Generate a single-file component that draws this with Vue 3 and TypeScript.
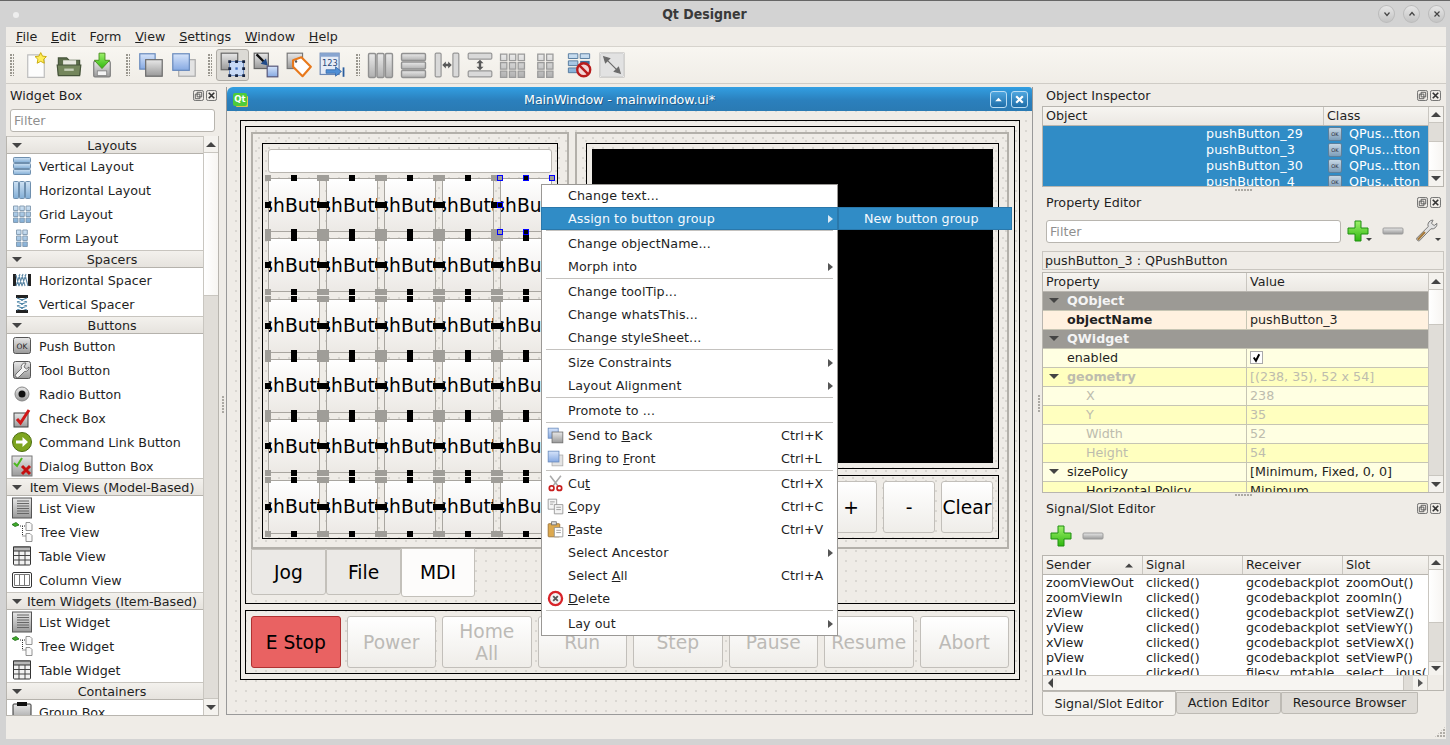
<script setup lang="ts">
type Tool = { icon: string, gray?: boolean, big?: boolean, active?: boolean }

const menus = [['F', 'ile'], ['E', 'dit'], ['', 'F', 'orm'], ['V', 'iew'], ['S', 'ettings'], ['W', 'indow'], ['H', 'elp']]

const toolGroups: Tool[][] = [
  [{ icon: 't-new' }, { icon: 't-open' }, { icon: 't-save' }],
  [{ icon: 't-back' }, { icon: 't-front' }],
  [{ icon: 't-edit', active: true }, { icon: 't-signal' }, { icon: 't-buddy' }, { icon: 't-tab' }],
  [
    { icon: 'i-hlayout', gray: true, big: true }, { icon: 'i-vlayout', gray: true, big: true }, { icon: 't-hsplit', gray: true },
    { icon: 't-vsplit', gray: true }, { icon: 'i-grid', gray: true, big: true }, { icon: 'i-form', gray: true, big: true },
    { icon: 't-break' }, { icon: 't-adjust', gray: true }
  ]
]

const widgetBox = [
  { name: 'Layouts', items: [['Vertical Layout', 'i-vlayout'], ['Horizontal Layout', 'i-hlayout'], ['Grid Layout', 'i-grid'], ['Form Layout', 'i-form']] },
  { name: 'Spacers', items: [['Horizontal Spacer', 'i-hspacer'], ['Vertical Spacer', 'i-vspacer']] },
  { name: 'Buttons', items: [['Push Button', 'i-ok'], ['Tool Button', 'i-tool'], ['Radio Button', 'i-radio'], ['Check Box', 'i-check'], ['Command Link Button', 'i-cmd'], ['Dialog Button Box', 'i-dialog']] },
  { name: 'Item Views (Model-Based)', items: [['List View', 'i-list'], ['Tree View', 'i-tree'], ['Table View', 'i-table'], ['Column View', 'i-column']] },
  { name: 'Item Widgets (Item-Based)', items: [['List Widget', 'i-list'], ['Tree Widget', 'i-tree'], ['Table Widget', 'i-table']] },
  { name: 'Containers', items: [['Group Box', 'i-group']] }
]

const handles = ['tl', 'tm', 'tr', 'ml', 'mr', 'bl', 'bm', 'br']
const cells = Array.from({ length: 30 }, (_, i) => i)
const bottomButtons = ['Power', 'Home\nAll', 'Run', 'Step', 'Pause', 'Resume', 'Abort']

type MenuRow = { label?: string, mn?: number, icon?: string, key?: string, sub?: boolean, on?: boolean, sep?: boolean }
const menuRows: MenuRow[] = [
  { label: 'Change text...' },
  { label: 'Assign to button group', sub: true, on: true },
  { sep: true },
  { label: 'Change objectName...' },
  { label: 'Morph into', sub: true },
  { sep: true },
  { label: 'Change toolTip...' },
  { label: 'Change whatsThis...' },
  { label: 'Change styleSheet...' },
  { sep: true },
  { label: 'Size Constraints', sub: true },
  { label: 'Layout Alignment', sub: true },
  { sep: true },
  { label: 'Promote to ...' },
  { sep: true },
  { label: 'Send to Back', mn: 8, icon: 't-back', key: 'Ctrl+K' },
  { label: 'Bring to Front', mn: 9, icon: 't-front', key: 'Ctrl+L' },
  { sep: true },
  { label: 'Cut', mn: 2, icon: 'm-cut', key: 'Ctrl+X' },
  { label: 'Copy', mn: 0, icon: 'm-copy', key: 'Ctrl+C' },
  { label: 'Paste', mn: 0, icon: 'm-paste', key: 'Ctrl+V' },
  { label: 'Select Ancestor', sub: true },
  { label: 'Select All', mn: 7, key: 'Ctrl+A' },
  { label: 'Delete', mn: 0, icon: 'm-delete' },
  { sep: true },
  { label: 'Lay out', sub: true }
]

const objects = ['pushButton_29', 'pushButton_3', 'pushButton_30', 'pushButton_4']

const props = [
  { kind: 'group', name: 'QObject', value: '', arrow: true },
  { kind: 'name', name: 'objectName', value: 'pushButton_3' },
  { kind: 'group', name: 'QWidget', value: '', arrow: true },
  { kind: 'light', name: 'enabled', value: '', check: true },
  { kind: 'yellow off bold', name: 'geometry', value: '[(238, 35), 52 x 54]', arrow: true },
  { kind: 'light off sub', name: 'X', value: '238' },
  { kind: 'yellow off sub', name: 'Y', value: '35' },
  { kind: 'light off sub', name: 'Width', value: '52' },
  { kind: 'yellow off sub', name: 'Height', value: '54' },
  { kind: 'light', name: 'sizePolicy', value: '[Minimum, Fixed, 0, 0]', arrow: true },
  { kind: 'yellow sub', name: 'Horizontal Policy', value: 'Minimum' }
]

const signals = [
  ['zoomViewOut', 'clicked()', 'gcodebackplot', 'zoomOut()'],
  ['zoomViewIn', 'clicked()', 'gcodebackplot', 'zoomIn()'],
  ['zView', 'clicked()', 'gcodebackplot', 'setViewZ()'],
  ['yView', 'clicked()', 'gcodebackplot', 'setViewY()'],
  ['xView', 'clicked()', 'gcodebackplot', 'setViewX()'],
  ['pView', 'clicked()', 'gcodebackplot', 'setViewP()'],
  ['navUp', 'clicked()', 'filesy...mtable', 'select...ious(']
]
</script>

<template>
  <div class="app">
    <svg class="defs" width="0" height="0" aria-hidden="true">
      <defs>
        <linearGradient id="gGray" x1="0" y1="0" x2="0" y2="1"><stop offset="0" stop-color="#e8e8e8" /><stop offset="1" stop-color="#999" /></linearGradient>
        <linearGradient id="gBlue" x1="0" y1="0" x2="0" y2="1"><stop offset="0" stop-color="#d6e4fa" /><stop offset="1" stop-color="#86a9e2" /></linearGradient>
        <linearGradient id="gBar" x1="0" y1="0" x2="0" y2="1"><stop offset="0" stop-color="#cfe2f3" /><stop offset="1" stop-color="#82aed6" /></linearGradient>
        <linearGradient id="gGreen" x1="0" y1="0" x2="0" y2="1"><stop offset="0" stop-color="#9df06a" /><stop offset="1" stop-color="#2fb80f" /></linearGradient>
        <linearGradient id="gOk" x1="0" y1="0" x2="0" y2="1"><stop offset="0" stop-color="#c9d9e6" /><stop offset="1" stop-color="#7b9cb8" /></linearGradient>
      </defs>
      <symbol id="t-new" viewBox="0 0 22 22">
        <path d="M4 2.5h11l3 3v16H4z" fill="#fdfdfd" stroke="#bdbdbd" />
        <path d="M15 0.5l1.5 3 3.3.4-2.4 2.3.6 3.3-3-1.6-3 1.6.6-3.3-2.4-2.3 3.3-.4z" fill="#ffee58" stroke="#c9a90a" stroke-width=".8" />
      </symbol>
      <symbol id="t-open" viewBox="0 0 22 22">
        <path d="M2 5h7l2 2h9v12H2z" fill="#5d6e4b" stroke="#46543a" />
        <path d="M6 7h11v8H6z" fill="#e8e8e0" />
        <path d="M1 11h20l-1 9H2z" fill="#74865c" stroke="#46543a" />
        <path d="M7 14h8v2H7z" fill="#c5ceb8" />
      </symbol>
      <symbol id="t-save" viewBox="0 0 22 22">
        <rect x="4" y="8" width="14" height="13" rx="1" fill="url(#gGray)" stroke="#7c7c7c" />
        <rect x="7" y="16" width="8" height="4" fill="#f4f4f4" stroke="#777" stroke-width=".6" />
        <path d="M8.5 1h5v6h4l-6.5 7-6.5-7h4z" fill="url(#gGreen)" stroke="#4a8f1f" stroke-width=".8" />
      </symbol>
      <symbol id="t-back" viewBox="0 0 22 22">
        <rect x="1.5" y="1.5" width="13" height="13" fill="url(#gBlue)" stroke="#6688bb" />
        <rect x="6.5" y="6.5" width="14" height="14" fill="url(#gGray)" stroke="#6a6a6a" />
      </symbol>
      <symbol id="t-front" viewBox="0 0 22 22">
        <rect x="6.5" y="6.5" width="14" height="14" fill="#e3e3e3" stroke="#aaa" />
        <rect x="1.5" y="1.5" width="14" height="14" fill="url(#gBlue)" stroke="#6688bb" />
      </symbol>
      <symbol id="t-edit" viewBox="0 0 22 22">
        <rect x="1" y="1" width="14" height="14" fill="url(#gGray)" stroke="#666" />
        <rect x="8" y="8" width="12" height="12" fill="#c8daf6" stroke="#5c7fb8" stroke-width=".7" />
        <path d="M7 7h2.400v2.400H7zM12.800 7h2.400v2.400h-2.400zM18.800 7h2.400v2.400h-2.400zM7 12.800h2.400v2.400H7zM18.800 12.800h2.400v2.400h-2.400zM7 18.800h2.400v2.400H7zM12.800 18.800h2.400v2.400h-2.400zM18.800 18.800h2.400v2.400h-2.400z" fill="#16233f" />
        <rect x="13" y="13" width="2" height="2" fill="#3f6fc0" />
      </symbol>
      <symbol id="t-signal" viewBox="0 0 22 22">
        <rect x="1" y="1" width="12" height="13" fill="url(#gGray)" stroke="#666" />
        <rect x="12" y="12" width="9" height="9" fill="url(#gBlue)" stroke="#557" />
        <path d="M3 2l7.5 7.5" stroke="#111" stroke-width="2" />
        <path d="M12.5 11.5l-6-1.5 4.5-4.5z" fill="#234c8a" />
      </symbol>
      <symbol id="t-buddy" viewBox="0 0 22 22">
        <rect x="1" y="1" width="13" height="13" fill="url(#gGray)" stroke="#777" />
        <path d="M6 7l7-2.500 8 8-7 8-8-8z" fill="#fff" stroke="#e8791c" stroke-width="1.800" stroke-linejoin="round" />
        <circle cx="8.500" cy="8" r="1" fill="#555" />
      </symbol>
      <symbol id="t-tab" viewBox="0 0 22 22">
        <rect x="1" y="1" width="16" height="18" fill="#e6ecf6" stroke="#6a87b5" />
        <rect x="1" y="1" width="16" height="3" fill="#88a5d0" />
        <text x="2.500" y="11.500" font-size="7" font-family="DejaVu Sans" fill="#2c4a7a">123</text>
        <path d="M6 15h8v-2.500l5 4-5 4V18H6z" fill="#4f8fd6" stroke="#2a5d9e" stroke-width=".6" />
        <rect x="20" y="13" width="1.500" height="8" fill="#2a5d9e" />
      </symbol>
      <symbol id="t-hsplit" viewBox="0 0 22 22">
        <rect x="1" y="1" width="5" height="20" rx="1" fill="#cfcfcf" stroke="#8f8f8f" />
        <rect x="16" y="1" width="5" height="20" rx="1" fill="#cfcfcf" stroke="#8f8f8f" />
        <path d="M7 11l3-3v2h2V8l3 3-3 3v-2h-2v2z" fill="#555" />
      </symbol>
      <symbol id="t-vsplit" viewBox="0 0 22 22">
        <rect x="1" y="1" width="20" height="5" rx="1" fill="#cfcfcf" stroke="#8f8f8f" />
        <rect x="1" y="16" width="20" height="5" rx="1" fill="#cfcfcf" stroke="#8f8f8f" />
        <path d="M11 6.500l3 3h-2v3h2l-3 3-3-3h2v-3H8z" fill="#555" />
      </symbol>
      <symbol id="t-break" viewBox="0 0 22 22">
        <path d="M2 1.500h8v4H2zM12 1.500h8v4h-8zM2 7.500h8v4H2zM2 13.500h8v4H2z" fill="url(#gBar)" stroke="#557a9e" stroke-width=".8" />
        <path d="M12 7.500h8v3h-8z" fill="#3f6e9a" />
        <circle cx="15" cy="15" r="5.500" fill="#f3d6d6" stroke="#b91c1c" stroke-width="2" />
        <path d="M11.500 11.500l7 7" stroke="#b91c1c" stroke-width="2" />
      </symbol>
      <symbol id="t-adjust" viewBox="0 0 22 22">
        <rect x="1" y="1" width="20" height="20" fill="#d7d7d7" stroke="#8a8a8a" />
        <rect x="1" y="1" width="20" height="20" fill="none" stroke="#fff" stroke-width=".5" />
        <path d="M4 4l5 1.500-3.500 3.500zM18 18l-5-1.500 3.500-3.500zM6 6l10 10" fill="#666" stroke="#666" />
      </symbol>

      <symbol id="i-vlayout" viewBox="0 0 22 22">
        <rect x="2.500" y="2.500" width="17" height="5" rx=".8" fill="url(#gBar)" stroke="#6e8fae" />
        <rect x="2.500" y="8.500" width="17" height="5" rx=".8" fill="url(#gBar)" stroke="#6e8fae" />
        <rect x="2.500" y="14.500" width="17" height="5" rx=".8" fill="url(#gBar)" stroke="#6e8fae" />
      </symbol>
      <symbol id="i-hlayout" viewBox="0 0 22 22">
        <rect x="2.500" y="2.500" width="5" height="17" rx=".8" fill="url(#gBar)" stroke="#6e8fae" />
        <rect x="8.500" y="2.500" width="5" height="17" rx=".8" fill="url(#gBar)" stroke="#6e8fae" />
        <rect x="14.500" y="2.500" width="5" height="17" rx=".8" fill="url(#gBar)" stroke="#6e8fae" />
      </symbol>
      <symbol id="i-grid" viewBox="0 0 22 22">
        <path d="M2.500 3h4.500v4.500H2.500zM8.800 3h4.500v4.500H8.800zM15 3h4.500v4.500H15zM2.500 9h4.500v4.500H2.500zM8.800 9h4.500v4.500H8.800zM15 9h4.500v4.500H15zM2.500 15h4.500v4.500H2.500zM8.800 15h4.500v4.500H8.800zM15 15h4.500v4.500H15z" fill="url(#gBar)" stroke="#7f97ae" stroke-width=".9" />
      </symbol>
      <symbol id="i-form" viewBox="0 0 22 22">
        <path d="M5.500 3h4.500v4.500H5.500zM11.800 3h4.500v4.500h-4.500zM5.500 9h4.500v4.500H5.500zM11.800 9h4.500v4.500h-4.500zM5.500 15h4.500v4.500H5.500zM11.800 15h4.500v4.500h-4.500z" fill="url(#gBar)" stroke="#7f97ae" stroke-width=".9" />
      </symbol>
      <symbol id="i-hspacer" viewBox="0 0 22 22">
        <path d="M2 5h3v12H2zM17 5h3v12h-3z" fill="#222" />
        <path d="M5 17L9 5M8 17l4-12M11 17l4-12M5 6l3 11M8 6l3 11M11 6l3 11M14 6l3 11" stroke="#5f8aa8" stroke-width="1.100" fill="none" />
      </symbol>
      <symbol id="i-vspacer" viewBox="0 0 22 22">
        <path d="M5 2h12v3H5zM5 17h12v3H5z" fill="#222" />
        <path d="M6 5l10 4M6 9l10 4M6 13l10 4M16 5L6 9M16 9L6 13M16 13L6 17" stroke="#4f86a8" stroke-width="1.200" fill="none" />
      </symbol>
      <symbol id="i-ok" viewBox="0 0 22 22">
        <rect x="2.500" y="2.500" width="17" height="16" rx="2" fill="url(#gGray)" stroke="#555" />
        <text x="11" y="13.500" text-anchor="middle" font-size="7.500" font-family="DejaVu Sans" fill="#222">OK</text>
      </symbol>
      <symbol id="i-tool" viewBox="0 0 22 22">
        <rect x="2.500" y="2.500" width="17" height="17" rx="2" fill="url(#gGray)" stroke="#555" />
        <path d="M15 4a4 4 0 0 0-4.500 5.500L5 15a2 2 0 0 0 3 3l5.500-5.500A4 4 0 0 0 18 8l-2.500 2-2.500-2z" fill="#f4f4f4" stroke="#555" stroke-width=".8" />
      </symbol>
      <symbol id="i-radio" viewBox="0 0 22 22">
        <circle cx="11" cy="11" r="7" fill="url(#gGray)" stroke="#888" />
        <circle cx="11" cy="11" r="3.500" fill="#111" />
      </symbol>
      <symbol id="i-check" viewBox="0 0 22 22">
        <rect x="3" y="6" width="14" height="14" fill="url(#gGray)" stroke="#444" />
        <path d="M6 12l3.500 4L18 3" fill="none" stroke="#d01818" stroke-width="3" />
      </symbol>
      <symbol id="i-cmd" viewBox="0 0 22 22">
        <circle cx="11" cy="11" r="9.500" fill="#7da51f" stroke="#4c6d10" />
        <path d="M5 9.500h6.500V6l5.500 5-5.500 5v-3.500H5z" fill="#fff" />
      </symbol>
      <symbol id="i-dialog" viewBox="0 0 22 22">
        <rect x="1" y="1" width="20" height="20" fill="url(#gGray)" stroke="#777" />
        <path d="M3 8l3 3 5-8" fill="none" stroke="#4cb81f" stroke-width="2" />
        <path d="M11 11l8 8M19 11l-8 8" stroke="#c51010" stroke-width="3" />
      </symbol>
      <symbol id="i-list" viewBox="0 0 22 22">
        <rect x="1.500" y="1" width="19" height="20" fill="url(#gGray)" stroke="#555" />
        <path d="M6 4h12M6 6.500h12M6 9h12M6 11.500h12M6 14h12M6 16.500h12" stroke="#666" />
      </symbol>
      <symbol id="i-tree" viewBox="0 0 22 22">
        <path d="M1 3.500l4-2 3 2.500-4 1.500z" fill="#3fae2a" stroke="#1c6a14" stroke-width=".8" />
        <path d="M9 5h5M11.500 5v10h3" stroke="#333" stroke-dasharray="1 1" fill="none" />
        <path d="M15 1.500h4l2 2v6h-6zM15 12.500h4l2 2v6h-6z" fill="#fafafa" stroke="#777" stroke-width=".8" />
      </symbol>
      <symbol id="i-table" viewBox="0 0 22 22">
        <rect x="2.500" y="2" width="17" height="18" rx="1" fill="#f2f2f2" stroke="#333" />
        <rect x="2.500" y="2" width="17" height="4" fill="#b8b8b8" stroke="#333" />
        <path d="M2.500 10.500h17M2.500 15h17M8 6v14M14 6v14" stroke="#444" />
      </symbol>
      <symbol id="i-column" viewBox="0 0 22 22">
        <rect x="1.500" y="3.500" width="19" height="15" rx="1.500" fill="#fff" stroke="#333" />
        <path d="M3.500 5.500h15v11h-15zM8.500 5.500v11M13.500 5.500v11" fill="none" stroke="#777" />
      </symbol>
      <symbol id="i-group" viewBox="0 0 22 22">
        <rect x="2" y="3" width="18" height="18" rx="1" fill="url(#gGray)" stroke="#333" />
        <rect x="6" y="1" width="10" height="4" fill="#111" />
      </symbol>

      <symbol id="m-cut" viewBox="0 0 22 22">
        <path d="M4 1l10 13M18 1L8 14" stroke="#aaa" stroke-width="2" fill="none" />
        <circle cx="6" cy="17" r="3" fill="none" stroke="#c81e1e" stroke-width="2.200" />
        <circle cx="16" cy="17" r="3" fill="none" stroke="#c81e1e" stroke-width="2.200" />
      </symbol>
      <symbol id="m-copy" viewBox="0 0 22 22">
        <path d="M1.500 1.500h11v13h-11z" fill="#f4f4f4" stroke="#888" />
        <path d="M9.500 8.500h11v12h-11z" fill="#f4f4f4" stroke="#888" />
        <path d="M4 5h6M4 8h4M12 12h6M12 15h6" stroke="#888" />
      </symbol>
      <symbol id="m-paste" viewBox="0 0 22 22">
        <rect x="1.500" y="3.500" width="15" height="17" rx="1" fill="#dda94e" stroke="#91672a" />
        <rect x="6" y="1" width="6" height="4" fill="#ddd" stroke="#666" />
        <path d="M9.500 8.500h11v12h-11z" fill="#fff" stroke="#888" />
        <path d="M12 12h6M12 15h6" stroke="#888" />
      </symbol>
      <symbol id="m-delete" viewBox="0 0 22 22">
        <circle cx="11" cy="11" r="8.500" fill="#f3f3f3" stroke="#d8242a" stroke-width="3" />
        <path d="M8 8l6 6M14 8l-6 6" stroke="#555" stroke-width="2.400" />
      </symbol>
      <symbol id="a-plus" viewBox="0 0 22 22">
        <path d="M8 1h6v7h7v6h-7v7H8v-7H1V8h7z" fill="url(#gGreen)" stroke="#1f8f10" stroke-linejoin="round" />
      </symbol>
      <symbol id="a-minus" viewBox="0 0 22 22">
        <rect x="1" y="8" width="20" height="6" rx="1" fill="url(#gGray)" stroke="#9c9c9c" />
      </symbol>
      <symbol id="a-wrench" viewBox="0 0 22 22">
        <path d="M17.500 1a4.500 4.500 0 0 0-4.500 6L2.500 17.500a2 2 0 0 0 2.500 2.500L15.500 9a4.500 4.500 0 0 0 5.500-5l-2.500 2-2.500-2z" fill="#e2e2e2" stroke="#777" stroke-width=".9" />
        <path d="M3.500 19L10 12" stroke="#a67a3a" stroke-width="2" />
      </symbol>
      <symbol id="d-float" viewBox="0 0 12 12">
        <rect x=".5" y=".5" width="11" height="11" rx="2" fill="none" stroke="#666" />
        <path d="M4.500 2.500h5v5h-5zM2.500 4.500h5v5h-5z" fill="none" stroke="#555" />
      </symbol>
      <symbol id="d-close" viewBox="0 0 12 12">
        <rect x=".5" y=".5" width="11" height="11" rx="2" fill="none" stroke="#666" />
        <path d="M3 3l6 6M9 3L3 9" stroke="#333" stroke-width="1.800" />
      </symbol>
      <symbol id="o-ok" viewBox="0 0 14 14">
        <rect x=".5" y=".5" width="13" height="13" rx="1.500" fill="url(#gOk)" stroke="#5c7f9b" />
        <text x="7" y="9" text-anchor="middle" font-size="5" font-family="DejaVu Sans" fill="#223">OK</text>
      </symbol>
    </svg>

    <header class="titlebar">
      <span class="title-dot"></span>
      <span class="title-text">Qt Designer</span>
      <div class="win-btns">
        <span class="win-btn"><svg viewBox="0 0 10 10"><path d="M2.500 3.500L5 6.500l2.500-3" /></svg></span>
        <span class="win-btn"><svg viewBox="0 0 10 10"><path d="M2.500 6.500L5 3.500l2.500 3" /></svg></span>
        <span class="win-btn"><svg viewBox="0 0 10 10"><path d="M2.500 2.500l5 5M7.500 2.500l-5 5" /></svg></span>
      </div>
    </header>

    <div class="frame">
      <nav class="menubar">
        <span v-for="m in menus" :key="m.join('')" class="menu-title">
          <template v-if="m[0]"><u>{{ m[0] }}</u>{{ m[1] }}</template>
          <template v-else>F<u>o</u>rm</template>
        </span>
      </nav>

      <div class="toolbar">
        <template v-for="(g, gi) in toolGroups" :key="gi">
          <span class="grab"></span>
          <span v-for="t in g" :key="t.icon" class="tool" :class="{ active: t.active }">
            <svg class="tool-ico" :class="{ gray: t.gray, big: t.big }"><use :href="`#${t.icon}`" /></svg>
          </span>
        </template>
      </div>

      <main class="main">
        <aside class="dock-left">
          <div class="dock-title">
            <span>Widget Box</span>
            <span class="dock-btns">
              <svg><use href="#d-float" /></svg><svg><use href="#d-close" /></svg>
            </span>
          </div>
          <div class="filter">Filter</div>
          <div class="wb-list">
            <div class="wb-scroll">
              <section v-for="c in widgetBox" :key="c.name">
                <div class="wb-head"><i class="tri-down"></i><span>{{ c.name }}</span></div>
                <div v-for="it in c.items" :key="it[0]" class="wb-item">
                  <svg class="wb-ico"><use :href="`#${it[1]}`" /></svg>
                  <span>{{ it[0] }}</span>
                </div>
              </section>
            </div>
            <div class="vbar wb-bar">
              <span class="bar-btn"><i class="tri-up"></i></span>
              <span class="bar-track"><span class="bar-thumb"></span></span>
              <span class="bar-btn"><i class="tri-down"></i></span>
            </div>
          </div>
        </aside>

        <section class="mdi">
          <div class="subwin">
            <div class="sub-title">
              <span class="qt-logo">Qt</span>
              <span class="sub-text">MainWindow - mainwindow.ui*</span>
              <span class="sub-btn"><svg viewBox="0 0 10 10"><path d="M2 6.500L5 3.500l3 3z" /></svg></span>
              <span class="sub-btn"><svg viewBox="0 0 10 10"><path d="M2 2l6 6M8 2l-6 6" class="x" /></svg></span>
            </div>
            <div class="form">
              <div class="lay outer">
                <div class="lay top">
                  <div class="panes">
                    <div class="pane pane-left">
                      <div class="lay keypad">
                        <div class="line-edit"></div>
                        <div class="keys">
                          <div v-for="c in cells" :key="c" class="key" :class="{ picked: c === 4 }">
                            <span class="key-label"><span>PushButton</span></span>
                            <i v-for="h in handles" :key="h" class="hd" :class="'hd-' + h"></i>
                          </div>
                        </div>
                      </div>
                    </div>
                    <div class="pane pane-right">
                      <div class="lay display"><div class="black"></div></div>
                      <div class="lay calc">
                        <span class="btn calc-btn">+</span>
                        <span class="btn calc-btn">-</span>
                        <span class="btn calc-btn">Clear</span>
                      </div>
                    </div>
                  </div>
                  <div class="tabs">
                    <span class="tab">Jog</span>
                    <span class="tab">File</span>
                    <span class="tab sel">MDI</span>
                  </div>
                </div>
                <div class="lay bottom">
                  <span class="btn estop">E Stop</span>
                  <span v-for="b in bottomButtons" :key="b" class="btn dis">{{ b }}</span>
                </div>
              </div>
            </div>
          </div>
        </section>

        <aside class="dock-right">
          <div class="dock-title first">
            <span>Object Inspector</span>
            <span class="dock-btns"><svg><use href="#d-float" /></svg><svg><use href="#d-close" /></svg></span>
          </div>
          <div class="oi">
            <div class="oi-table">
              <div class="thead">
                <span class="th oi-c1">Object</span>
                <span class="th oi-c2">Class</span>
              </div>
              <div class="oi-body">
                <div v-for="o in objects" :key="o" class="oi-row">
                  <span class="oi-name">{{ o }}</span>
                  <svg class="oi-ico"><use href="#o-ok" /></svg>
                  <span>QPus...tton</span>
                </div>
              </div>
            </div>
            <div class="vbar oi-bar">
              <span class="bar-btn"><i class="tri-up"></i></span>
              <span class="bar-track"><span class="bar-thumb"></span></span>
              <span class="bar-btn"><i class="tri-down"></i></span>
            </div>
          </div>

          <div class="dock-title second">
            <span>Property Editor</span>
            <span class="dock-btns"><svg><use href="#d-float" /></svg><svg><use href="#d-close" /></svg></span>
          </div>
          <div class="pe-tools">
            <div class="filter pe-filter">Filter</div>
            <svg class="act"><use href="#a-plus" /></svg><i class="menu-tick"></i>
            <svg class="act minus"><use href="#a-minus" /></svg>
            <svg class="act wrench"><use href="#a-wrench" /></svg><i class="menu-tick"></i>
          </div>
          <div class="pe-label">pushButton_3 : QPushButton</div>
          <div class="pe">
            <div class="pe-table">
              <div class="thead">
                <span class="th pe-c1">Property</span>
                <span class="th pe-c2">Value</span>
              </div>
              <div v-for="p in props" :key="p.name" class="pe-row" :class="p.kind">
                <span class="pe-name">
                  <i v-if="p.arrow" class="tri-down"></i>{{ p.name }}
                </span>
                <span class="pe-val">
                  <span v-if="p.check" class="check"><svg viewBox="0 0 10 10"><path d="M2.500 5l2 3 3-6" /></svg></span>
                  <template v-else>{{ p.value }}</template>
                </span>
              </div>
            </div>
            <div class="vbar pe-bar">
              <span class="bar-btn"><i class="tri-up"></i></span>
              <span class="bar-track"><span class="bar-thumb"></span></span>
              <span class="bar-btn"><i class="tri-down"></i></span>
            </div>
          </div>

          <div class="dock-title third">
            <span>Signal/Slot Editor</span>
            <span class="dock-btns"><svg><use href="#d-float" /></svg><svg><use href="#d-close" /></svg></span>
          </div>
          <div class="ss-tools">
            <svg class="act"><use href="#a-plus" /></svg>
            <svg class="act minus2"><use href="#a-minus" /></svg>
          </div>
          <div class="ss">
            <div class="ss-top">
              <div class="ss-table">
                <div class="thead">
                  <span class="th ss-c">Sender<i class="tri-up sort"></i></span>
                  <span class="th ss-c">Signal</span>
                  <span class="th ss-c">Receiver</span>
                  <span class="th ss-c last">Slot</span>
                </div>
                <div class="ss-body">
                  <div v-for="s in signals" :key="s[0]" class="ss-row">
                    <span v-for="(c, ci) in s" :key="ci" class="ss-cell" :class="{ last: ci === 3 }">{{ c }}</span>
                  </div>
                </div>
              </div>
              <div class="vbar ss-bar">
                <span class="bar-btn"><i class="tri-up"></i></span>
                <span class="bar-track"><span class="bar-thumb"></span></span>
                <span class="bar-btn"><i class="tri-down"></i></span>
              </div>
            </div>
            <div class="hbar">
              <span class="bar-btn h"><i class="tri-left"></i></span>
              <span class="h-track"><span class="h-thumb"></span></span>
              <span class="bar-btn h"><i class="tri-right"></i></span>
            </div>
          </div>
          <div class="dock-tabs">
            <span class="dtab sel">Signal/Slot Editor</span>
            <span class="dtab a">Action Editor</span>
            <span class="dtab b">Resource Browser</span>
          </div>
        </aside>
      </main>
    </div>

    <!-- context menu floats over the form -->
    <div class="ctx">
      <template v-for="(r, i) in menuRows" :key="i">
        <div v-if="r.sep" class="ctx-sep"></div>
        <div v-else class="ctx-row" :class="{ on: r.on }">
          <span class="ctx-ico"><svg v-if="r.icon"><use :href="`#${r.icon}`" /></svg></span>
          <span v-if="r.mn !== undefined">{{ r.label!.slice(0, r.mn) }}<u>{{ r.label![r.mn] }}</u>{{ r.label!.slice(r.mn + 1) }}</span>
          <span v-else>{{ r.label }}</span>
          <span class="ctx-key">{{ r.key }}<i v-if="r.sub" class="tri-right"></i></span>
        </div>
      </template>
    </div>
    <div class="ctx-subm">New button group</div>
    <i class="grip"></i>
    <i class="split-v sv-left"></i>
    <i class="split-v sv-right"></i>
    <i class="split-h sh-top"></i>
    <i class="split-h sh-bottom"></i>
  </div>
</template>

<style scoped>
.app {
  position: relative;
  width: 1450px;
  height: 745px;
  overflow: hidden;
  display: flex;
  flex-direction: column;
  background: #d3d3d3;
  border-top: 1px solid #666;
  box-sizing: border-box;
  font-family: "DejaVu Sans", sans-serif;
  font-size: 12.7px;
  color: #1f1f1f;
}
.defs { position: absolute; }
i { font-style: normal; }

.titlebar {
  height: 26px;
  flex: none;
  position: relative;
  display: flex;
  align-items: center;
  justify-content: center;
}
.title-dot {
  position: absolute;
  left: 13px;
  top: 11px;
  width: 6px;
  height: 6px;
  border-radius: 50%;
  background: #eee;
}
.title-text {
  font-weight: 700;
  font-size: 14px;
  font-stretch: condensed;
  color: #3a3a3a;
  margin-right: 41px;
}
.win-btns {
  position: absolute;
  right: 5px;
  top: 4px;
  display: flex;
  gap: 8px;
}
.win-btn {
  width: 17px;
  height: 18px;
  border-radius: 50%;
  border: 1px solid #bbb;
  background: linear-gradient(#e6e6e6, #c4c4c4);
  box-sizing: border-box;
  display: flex;
  align-items: center;
  justify-content: center;
}
.win-btn svg { width: 10px; height: 10px; fill: none; stroke: #444; stroke-width: 1.2; }

.frame {
  flex: 1;
  margin: 0 4px 6px 6px;
  background: #efece7;
  display: flex;
  flex-direction: column;
  min-height: 0;
}
.menubar {
  height: 19px;
  flex: none;
  display: flex;
  align-items: center;
  gap: 13.800px;
  padding-left: 10px;
  border-bottom: 1px solid #d6d3cd;
}
.menu-title { line-height: 19px; }

.toolbar {
  height: 37px;
  flex: none;
  display: flex;
  align-items: center;
  background: linear-gradient(#f8f6f1, #f0ede7);
  border-bottom: 1px solid #cfccc6;
  box-sizing: border-box;
}
.grab {
  width: 4px;
  height: 22px;
  margin: 0 4px 0 8px;
  background: radial-gradient(circle at 1px 1px, #9a978f .8px, transparent 1px) 0 0 / 3px 3px;
}
.grab:first-child { margin-left: 4px; margin-right: 5px; }
.tool {
  width: 33px;
  height: 32px;
  box-sizing: border-box;
  border: 1px solid transparent;
  border-radius: 3px;
  display: flex;
  align-items: center;
  justify-content: center;
}
.tool.active { background: #dcdad5; border-color: #aeaba5; }
.tool-ico { width: 26px; height: 26px; flex: none; }
.tool-ico.big { width: 31px; height: 31px; }
.gray { filter: grayscale(1) brightness(1.05); }

.main {
  flex: 1;
  display: flex;
  min-height: 0;
}
.dock-left { width: 214px; flex: none; }
.dock-title {
  height: 23px;
  display: flex;
  align-items: center;
  justify-content: space-between;
  padding: 0 3px 0 4px;
}
.dock-btns { display: flex; gap: 2px; }
.dock-btns svg { width: 11px; height: 11px; }
.filter {
  height: 23px;
  line-height: 21px;
  margin: 2px 5px 4px 4px;
  box-sizing: border-box;
  background: #fff;
  border: 1px solid #b8b5af;
  border-radius: 3px;
  padding-left: 3px;
  color: #8f8f8f;
}
.wb-list {
  height: 580px;
  display: flex;
  border: 1px solid #b8b5af;
  border-top: 0;
  box-sizing: border-box;
  margin-right: 1px;
}
.wb-scroll { flex: 1; overflow: hidden; background: #fff; }
.wb-head {
  height: 18px;
  box-sizing: border-box;
  background: linear-gradient(#f3f1ed, #e6e3de);
  border-top: 1px solid #c8c5bf;
  border-bottom: 1px solid #b5b2ac;
  display: flex;
  align-items: center;
  justify-content: center;
  position: relative;
  padding-left: 14px;
  white-space: nowrap;
}
.wb-head span { margin-left: -18px; padding-left: 18px; }
.wb-head .tri-down { position: absolute; left: 5px; top: 6px; }
.wb-item {
  height: 24px;
  display: flex;
  align-items: center;
  padding-left: 4px;
  gap: 6px;
  white-space: nowrap;
}
.wb-ico { width: 22px; height: 22px; flex: none; }

.tri-down, .tri-up, .tri-left, .tri-right { display: inline-block; width: 0; height: 0; }
.tri-down { border-left: 5px solid transparent; border-right: 5px solid transparent; border-top: 5px solid #444; }
.tri-up { border-left: 5px solid transparent; border-right: 5px solid transparent; border-bottom: 5px solid #444; }
.tri-left { border-top: 5px solid transparent; border-bottom: 5px solid transparent; border-right: 5px solid #444; }
.tri-right { border-top: 4.500px solid transparent; border-bottom: 4.500px solid transparent; border-left: 5px solid #555; }

.vbar {
  width: 14px;
  flex: none;
  display: flex;
  flex-direction: column;
  border-left: 1px solid #c9c6c0;
  background: #e0ddd8;
}
.bar-btn {
  height: 16px;
  flex: none;
  background: #f4f2ee;
  border-bottom: 1px solid #c9c6c0;
  display: flex;
  align-items: center;
  justify-content: center;
}
.bar-btn:last-child { border-bottom: 0; border-top: 1px solid #c9c6c0; }
.bar-btn.h { width: 14px; height: 14px; border: 0; }
.bar-track { flex: 1; display: block; min-height: 0; }
.bar-thumb {
  display: block;
  background: linear-gradient(90deg, #fff, #f7f5f2);
  border-bottom: 1px solid #c9c6c0;
}
.wb-bar .bar-thumb { height: 142px; }
.oi-bar .bar-track { padding-top: 18px; }
.oi-bar .bar-thumb { height: 28px; border-top: 1px solid #c9c6c0; }
.pe-bar .bar-thumb { height: 34px; }
.ss-bar .bar-thumb { height: 52px; }

.mdi { width: 817px; flex: none; padding: 3px 0 0 6px; box-sizing: border-box; }
.subwin {
  width: 807px;
  height: 628px;
  box-sizing: border-box;
  border: 1px solid #999;
  border-top: 0;
  background: #efece7;
  display: flex;
  flex-direction: column;
}
.sub-title {
  height: 24px;
  flex: none;
  background: linear-gradient(#329fe2, #2b80bd 55%, #2a7ab3);
  border-radius: 6px 3px 0 0;
  display: flex;
  align-items: center;
  gap: 4px;
  color: #fff;
  padding: 0 4px 0 6px;
}
.qt-logo {
  width: 14px;
  height: 13px;
  line-height: 13px;
  text-align: center;
  background: #4ecb3a;
  border-radius: 2px;
  font-size: 8.500px;
  font-weight: 700;
  color: #fff;
  box-shadow: 2px 2px 0 -1px #e0c84a;
}
.sub-text { flex: 1; text-align: center; letter-spacing: -.1px; padding-left: 2px; text-shadow: 1px 1px 0 rgba(0, 0, 0, .3); }
.sub-btn {
  width: 17px;
  height: 17px;
  box-sizing: border-box;
  border: 1px solid #b9dcf3;
  border-radius: 3px;
  background: linear-gradient(#4fa6df, #1e6da8);
  display: flex;
  align-items: center;
  justify-content: center;
}
.sub-btn svg { width: 11px; height: 11px; fill: #fff; stroke: none; }
.sub-btn .x { stroke: #fff; stroke-width: 2; fill: none; }

.form, .pane {
  background-image: radial-gradient(circle at 1px 1px, #8f8d88 .55px, transparent .75px);
  background-size: 10px 10px;
}
.form { flex: 1; padding: 9px 12px 0 13px; background-position: -2px -1px; }
.lay { border: 1px solid #000; box-sizing: border-box; }
.outer {
  height: 560px;
  padding: 5px 4px;
  display: flex;
  flex-direction: column;
  gap: 6px;
}
.top { height: 478px; padding: 5px; flex: none; }
.panes { display: flex; gap: 6px; height: 417px; }
.pane {
  box-sizing: border-box;
  border: 2px solid #b3b0aa;
  padding: 9px;
  height: 100%;
  background-position: 5px 3px;
}
.pane-left { width: 318px; }
.pane-right { width: 434px; display: flex; flex-direction: column; gap: 6px; padding-right: 8px; }
.keypad { padding: 5px; height: 396px; }
.line-edit {
  height: 24px;
  box-sizing: border-box;
  background: #fff;
  border: 1px solid #b8b5af;
  border-radius: 3px;
}
.keys {
  margin-top: 5px;
  display: grid;
  grid-template-columns: repeat(5, 52px);
  grid-auto-rows: 54px;
  column-gap: 6px;
  row-gap: 6.330px;
}
.key {
  position: relative;
  box-sizing: border-box;
  border: 1px solid #a9a6a0;
  background: linear-gradient(#fff, #ece9e5);
  font-size: 18.670px;
  color: #000;
}
.key-label {
  display: flex;
  justify-content: center;
  align-items: center;
  height: 100%;
  overflow: hidden;
  white-space: nowrap;
}
.hd {
  position: absolute;
  width: 6px;
  height: 6px;
  background: #000;
  z-index: 2;
}
.hd-tl, .hd-tr, .hd-bl, .hd-br { background: #9f9d98; }
.hd-tl, .hd-tm, .hd-tr { top: -4px; }
.hd-ml, .hd-mr { top: 23px; }
.hd-bl, .hd-bm, .hd-br { bottom: -4px; }
.hd-tl, .hd-ml, .hd-bl { left: -4px; }
.hd-tm, .hd-bm { left: 22px; }
.hd-tr, .hd-mr, .hd-br { right: -4px; }
.picked .hd { box-sizing: border-box; outline: 1px solid #0000ff; outline-offset: -1px; z-index: 3; }

.display { height: 326px; padding: 5px; flex: none; }
.black { height: 100%; background: #000; }
.calc {
  height: 64px;
  flex: none;
  padding: 5px;
  display: flex;
  justify-content: flex-end;
  gap: 6px;
}
.btn {
  box-sizing: border-box;
  border: 1px solid #c2bfba;
  border-radius: 3px;
  background: linear-gradient(#fff, #efede9);
  display: flex;
  align-items: center;
  justify-content: center;
  text-align: center;
  padding-top: 2px;
  font-size: 18.670px;
  line-height: 22px;
  color: #000;
  white-space: pre-line;
}
.calc-btn { width: 52px; }
.tabs { display: flex; height: 48px; padding-top: 0; margin-top: -1px; }
.tab {
  width: 75px;
  height: 46px;
  box-sizing: border-box;
  margin-top: 1px;
  background: #ebe9e6;
  border: 1px solid #c3c0ba;
  border-radius: 0 0 3px 3px;
  display: flex;
  align-items: center;
  justify-content: center;
  font-size: 18.670px;
  color: #000;
}
.tab.sel { height: 49px; margin-top: 0; background: #fdfcfb; width: 74px; }
.bottom {
  height: 64px;
  flex: none;
  padding: 5px;
  display: flex;
  gap: 6px;
}
.bottom .btn { flex: 1; }
.estop { background: #e96262; border-color: #b03232; }
.btn.dis { color: #bcbab6; }

.dock-right { flex: 1; padding: 1px 2px 0 5px; min-width: 0; box-sizing: border-box; }
.dock-title.first { height: 21px; padding-left: 4px; }
.dock-title.second { height: 22px; margin-top: 4px; padding-left: 4px; }
.dock-title.third { height: 22px; margin-top: 4px; padding-left: 4px; }
.oi { height: 81px; display: flex; border: 1px solid #b8b5af; box-sizing: border-box; }
.oi-bar .bar-btn { height: 15px; }
.oi-table { flex: 1; min-width: 0; display: flex; flex-direction: column; }
.thead {
  height: 18px;
  flex: none;
  display: flex;
  background: linear-gradient(#f7f5f1, #ebe8e3);
  border-bottom: 1px solid #b8b5af;
  box-sizing: content-box;
}
.th { line-height: 18px; padding-left: 3px; box-sizing: border-box; border-right: 1px solid #c9c6c0; position: relative; }
.oi-c1 { width: 281px; }
.oi-c2 { flex: 1; border-right: 0; }
.oi-body { flex: 1; overflow: hidden; background: #308cc6; color: #fff; }
.oi-row { height: 16px; line-height: 16px; display: flex; align-items: center; letter-spacing: .1px; }
.oi-name { width: 285px; padding-left: 163px; box-sizing: border-box; }
.oi-ico { width: 14px; height: 14px; margin-right: 7px; flex: none; }

.pe-tools { height: 22px; margin-top: 7px; display: flex; align-items: center; padding-left: 4px; }
.pe-filter { width: 295px; flex: none; margin: 0; }
.act { width: 22px; height: 22px; flex: none; margin-left: 6px; }
.act.minus { margin-left: 10px; }
.act.wrench { margin-left: 10px; width: 24px; height: 24px; }
.act.minus2 { margin-left: 10px; }
.menu-tick {
  width: 0;
  height: 0;
  flex: none;
  align-self: flex-end;
  margin: 0 0 1px -3px;
  border-left: 3px solid transparent;
  border-right: 3px solid transparent;
  border-top: 3px solid #444;
}
.pe-label {
  height: 19px;
  line-height: 17px;
  margin-top: 9px;
  box-sizing: border-box;
  border: 1px solid #c9c6c0;
  padding-left: 2px;
}
.pe {
  height: 221px;
  margin-top: 2px;
  display: flex;
  border: 1px solid #b8b5af;
  box-sizing: border-box;
}
.pe-table { flex: 1; min-width: 0; overflow: hidden; }
.pe-c1 { width: 204px; }
.pe-c2 { flex: 1; border-right: 0; }
.pe-row {
  height: 19px;
  box-sizing: border-box;
  display: flex;
  line-height: 18px;
  border-bottom: 1px solid #c6c5b4;
  white-space: nowrap;
}
.pe-name {
  width: 204px;
  flex: none;
  box-sizing: border-box;
  padding-left: 24px;
  border-right: 1px solid #c6c5b4;
  position: relative;
}
.pe-name .tri-down { position: absolute; left: 6px; top: 6px; }
.pe-val { padding-left: 3px; }
.pe-row.group { background: #9c9a95; color: #f4f4f4; font-weight: 700; }
.pe-row.group .pe-name { border-right: 0; }
.pe-row.name { background: #fff1e0; }
.pe-row.name .pe-name { font-weight: 700; }
.pe-row.light { background: #ffffe2; }
.pe-row.yellow { background: #ffffbf; }
.pe-row.off { color: #bdbcae; }
.pe-row.bold .pe-name { font-weight: 700; }
.pe-row.sub .pe-name { padding-left: 43px; }
.check {
  width: 13px;
  height: 13px;
  margin-top: 2px;
  display: block;
  box-sizing: border-box;
  background: #fff;
  border: 1px solid #aaa;
}
.check svg { display: block; width: 11px; height: 11px; fill: none; stroke: #000; stroke-width: 1.8; }

.ss-tools { height: 21px; margin-top: 6px; display: flex; align-items: center; padding-left: 2px; }
.ss { height: 136px; margin-top: 9px; border: 1px solid #b8b5af; box-sizing: border-box; display: flex; flex-direction: column; }
.ss-top { height: 119px; display: flex; flex: none; }
.ss-table { flex: 1; min-width: 0; display: flex; flex-direction: column; }
.ss-c { width: 100px; flex: none; }
.ss-c.last { flex: 1; border-right: 0; }
.sort { position: absolute; right: 8px; top: 7px; transform: scale(.8); }
.ss-body { flex: 1; overflow: hidden; background: #fff; }
.ss-row { height: 15px; line-height: 15px; display: flex; white-space: nowrap; }
.ss-cell { width: 100px; padding-left: 3px; box-sizing: border-box; overflow: hidden; }
.ss-cell.last { flex: 1; }
.ss-bar .bar-btn { height: 13px; }
.hbar {
  flex: 1;
  display: flex;
  align-items: stretch;
  border-top: 1px solid #c9c6c0;
  margin-right: 15px;
  background: #e0ddd8;
  border-right: 1px solid #c9c6c0;
}
.h-track { flex: 1; display: block; }
.h-thumb { display: block; height: 100%; width: 346px; background: #f7f5f2; border-right: 1px solid #c9c6c0; }
.bar-btn.h:last-child { border-top: 0; }
.dock-tabs { display: flex; height: 25px; }
.dtab {
  height: 22px;
  margin-top: 1px;
  line-height: 20px;
  box-sizing: border-box;
  text-align: center;
  background: #dedbd6;
  border: 1px solid #bdbab4;
  border-radius: 0 0 3px 3px;
}
.dtab.sel { width: 134px; height: 25px; margin-top: 0; line-height: 24px; background: #f5f3ef; }
.dtab.a { width: 105px; }
.dtab.b { width: 137px; margin-left: 0; }

.ctx {
  position: absolute;
  left: 541px;
  top: 183px;
  width: 297px;
  box-sizing: border-box;
  border: 1px solid #9a9895;
  background: #fff;
  z-index: 10;
  letter-spacing: .08px;
}
.ctx-row {
  height: 23px;
  display: grid;
  grid-template-columns: 26px 1fr 56px;
  align-items: center;
  white-space: nowrap;
}
.ctx-row:first-child { height: 22px; padding-bottom: 1px; box-sizing: border-box; }
.ctx-ico { display: flex; padding-left: 5px; }
.ctx-ico svg { width: 17px; height: 17px; }
.ctx-key {
  position: relative;
  align-self: stretch;
  line-height: 23px;
}
.ctx-key .tri-right { position: absolute; right: 4px; top: 50%; transform: translateY(-50%); }
.ctx-row.on {
  background: #308cc6;
  color: #f4f9fd;
  margin: 0 -1px;
  padding-left: 1px;
  box-shadow: inset 0 0 0 1px #2a78ab;
}
.ctx-row.on .tri-right { border-left-color: #dbe9f4; right: 5px; }
.ctx-sep { height: 2px; margin: 0 4px; border-top: 1px solid #c4c2bf; box-sizing: border-box; }
.ctx-subm {
  position: absolute;
  left: 838px;
  top: 206px;
  width: 174px;
  height: 23px;
  line-height: 21px;
  box-sizing: border-box;
  padding-left: 25px;
  background: #308cc6;
  border: 1px solid #2a78ab;
  color: #f4f9fd;
  z-index: 11;
}
.grip {
  position: absolute;
  right: 4px;
  bottom: 7px;
  width: 12px;
  height: 12px;
  background: radial-gradient(circle at 1px 1px, #b0ada7 .8px, transparent 1px) 0 0 / 3px 3px;
  clip-path: polygon(100% 0, 100% 100%, 0 100%);
}
.split-v, .split-h {
  position: absolute;
  background: radial-gradient(circle at 1px 1px, #aaa7a1 .7px, transparent .9px) 0 0 / 3px 3px;
}
.split-v { width: 2px; height: 17px; }
.split-h { width: 17px; height: 2px; }
.sv-left { left: 222px; top: 395px; }
.sv-right { left: 1038px; top: 394px; }
.sh-top { left: 1235px; top: 188px; }
.sh-bottom { left: 1235px; top: 493px; }
</style>

<style>
html, body { margin: 0; background: #d3d3d3; }
</style>
